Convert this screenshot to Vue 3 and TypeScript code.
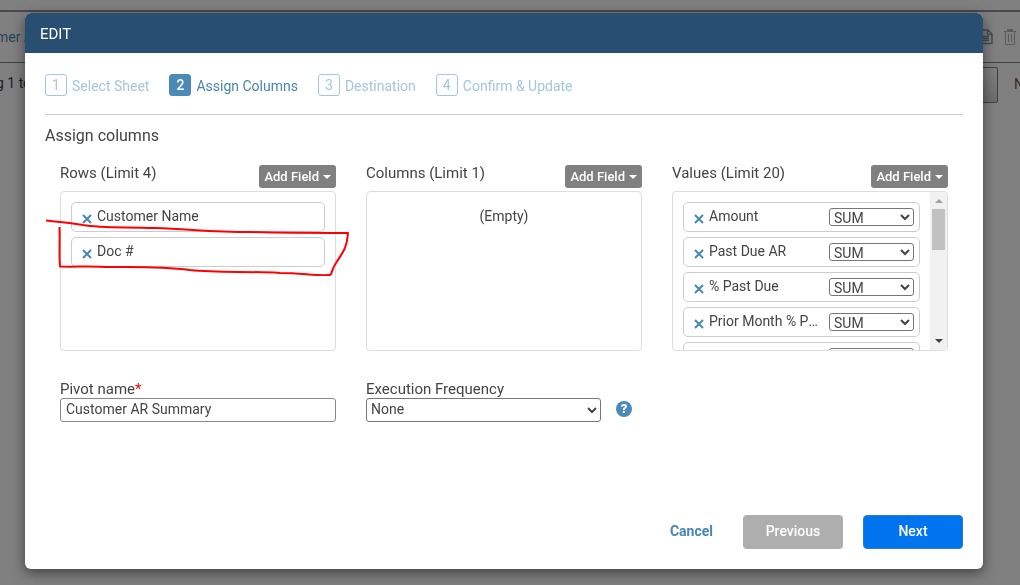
<script setup lang="ts">
import { ref } from 'vue'

interface ValueField {
  name: string
  aggregate: string
}

const steps: string[] = ['Select Sheet', 'Assign Columns', 'Destination', 'Confirm & Update']
const activeStep = ref(1)
const rowFields = ref<string[]>(['Customer Name', 'Doc #'])
const valueFields = ref<ValueField[]>([
  { name: 'Amount', aggregate: 'SUM' },
  { name: 'Past Due AR', aggregate: 'SUM' },
  { name: '% Past Due', aggregate: 'SUM' },
  { name: 'Prior Month % Past Due', aggregate: 'SUM' },
  { name: 'Prior Month AR', aggregate: 'SUM' },
])
const pivotName = ref('Customer AR Summary')
const frequency = ref('None')

function removeRow(index: number): void {
  rowFields.value.splice(index, 1)
}
function removeValue(index: number): void {
  valueFields.value.splice(index, 1)
}
</script>

<template>
  <div class="page">
    <div class="page-row">
      <a class="page-link" href="#">mer A</a>
      <div class="page-icons">
        <svg width="16" height="18" viewBox="0 0 16 18" fill="none" stroke="#444c52" stroke-width="1.4">
          <path d="M1 2h9l4 4v9.500H1zM9.500 2v4.500H14M3 8.500h8M3 10.500h8M3 12.500h8" />
        </svg>
        <svg width="12" height="18" viewBox="0 0 12 18" fill="none" stroke="#5c5c5c">
          <path d="M0 3.500h12M3.500 2.500V1.500h5v1M3 2.500h6M1.500 4v12.500h9V4M4.500 6v8M7.500 6v8" />
        </svg>
      </div>
    </div>
    <div class="page-foot">
      <span class="page-count">g 1 to</span>
      <span class="page-size"></span>
      <span class="page-next">N</span>
    </div>
  </div>

  <div class="overlay">
    <section class="modal" role="dialog" aria-labelledby="modal-title">
      <header class="modal-head"><h1 id="modal-title">EDIT</h1></header>
      <div class="modal-body">
        <ol class="steps">
          <li v-for="(step, i) in steps" :key="step" class="step" :class="{ active: i === activeStep }">
            <span class="step-number">{{ i + 1 }}</span>
            <span class="step-name">{{ step }}</span>
          </li>
        </ol>
        <h2>Assign columns</h2>

        <div class="columns">
          <div class="column">
            <div class="column-head">
              <h3>Rows (Limit 4)</h3>
              <button class="add" type="button">Add Field<i class="caret"></i></button>
            </div>
            <div class="box">
              <ul class="fields">
                <li v-for="(field, i) in rowFields" :key="field" class="field">
                  <button class="remove" type="button" :aria-label="'Remove ' + field" @click="removeRow(i)">
                    <svg width="10" height="10" viewBox="0 0 10 10"><path d="M1 1l8 8M9 1l-8 8" /></svg>
                  </button>
                  <span class="field-name">{{ field }}</span>
                </li>
              </ul>
              <svg class="markup" width="306" height="62" viewBox="0 0 306 62">
                <path d="M1 6.500C16 8 28 9 38 11C55 14 75 13 110 14C145 15 165 18 205 18C240 19 270 19 303 19C302 35 297 39 291 49C286 56 287 62 284 61C270 62 257 59 235 59C200 57 174 59 145 56C115 52 90 53 60 53C43 52 30 53 15 52.500C14 40 15 28 14.500 13" />
              </svg>
            </div>
          </div>

          <div class="column">
            <div class="column-head">
              <h3>Columns (Limit 1)</h3>
              <button class="add" type="button">Add Field<i class="caret"></i></button>
            </div>
            <div class="box"><p class="empty">(Empty)</p></div>
          </div>

          <div class="column">
            <div class="column-head">
              <h3>Values (Limit 20)</h3>
              <button class="add" type="button">Add Field<i class="caret"></i></button>
            </div>
            <div class="box scrolling">
              <ul class="fields">
                <li v-for="(field, i) in valueFields" :key="field.name" class="field">
                  <button class="remove" type="button" :aria-label="'Remove ' + field.name" @click="removeValue(i)">
                    <svg width="10" height="10" viewBox="0 0 10 10"><path d="M1 1l8 8M9 1l-8 8" /></svg>
                  </button>
                  <span class="field-name">{{ field.name }}</span>
                  <select v-model="field.aggregate" class="aggregate" :aria-label="'Aggregate for ' + field.name">
                    <option>SUM</option>
                    <option>COUNT</option>
                  </select>
                </li>
              </ul>
              <div class="scrollbar" aria-hidden="true">
                <i class="arrow up"></i>
                <i class="thumb"></i>
                <i class="arrow down"></i>
              </div>
            </div>
          </div>
        </div>

        <div class="columns form">
          <div class="control">
            <label for="pivot-name">Pivot name<span class="required">*</span></label>
            <input id="pivot-name" v-model="pivotName" type="text" />
          </div>
          <div class="control">
            <label for="frequency">Execution Frequency</label>
            <div class="control-line">
              <select id="frequency" v-model="frequency">
                <option>None</option>
                <option>Daily</option>
              </select>
              <button class="help" type="button" aria-label="Help">?</button>
            </div>
          </div>
        </div>
      </div>

      <footer class="modal-foot">
        <a class="cancel" href="#">Cancel</a>
        <button class="action previous" type="button">Previous</button>
        <button class="action next" type="button">Next</button>
      </footer>
    </section>
  </div>
</template>

<style>
body {
  margin: 0;
  background: #808080;
  overflow: hidden;
}
</style>

<style scoped>
* {
  box-sizing: border-box;
}
h1,
h2,
h3,
p,
ol,
ul {
  margin: 0;
  padding: 0;
  font-weight: 400;
  list-style: none;
}
button,
input,
select {
  font-family: inherit;
  color: inherit;
}
.page,
.overlay {
  font-family: Roboto, sans-serif;
  font-size: 14px;
  line-height: 20px;
  color: #444;
}
.page {
  min-height: 100vh;
  margin-left: -4px;
  padding-top: 10px;
}
.page-row {
  display: flex;
  align-items: center;
  justify-content: space-between;
  height: 53px;
  padding-right: 4px;
  border-top: 2px solid #4a4a4a;
  border-bottom: 1px solid #404040;
}
.page-link {
  color: #24435c;
  text-decoration: none;
}
.page-icons {
  display: flex;
  gap: 10px;
}
.page-foot {
  display: flex;
  align-items: flex-start;
  padding-top: 4px;
  color: #1c1c1c;
}
.page-count {
  flex: 1;
  padding-top: 6px;
}
.page-size {
  width: 60px;
  height: 36px;
  border: 1px solid #404040;
  border-radius: 2px;
  background: linear-gradient(#808080, #6e6e6e);
}
.page-next {
  width: 22px;
  padding: 7px 0 0 16px;
  color: #3c2c24;
}
.overlay {
  position: fixed;
  inset: 0;
  display: flex;
  padding: 13px 37px 16px 25px;
}
.modal {
  flex: 1;
  display: flex;
  flex-direction: column;
  border-radius: 6px;
  background: #fff;
  box-shadow: 0 4px 14px rgba(0, 0, 0, 0.5);
}
.modal-head {
  padding: 11px 15px 9px;
  border-radius: 6px 6px 0 0;
  background: #284e72;
  color: #fff;
}
h1 {
  font-size: 15px;
  line-height: 20px;
}
.modal-body {
  flex: 1;
  padding: 21px 20px 0;
}
.steps {
  display: flex;
  gap: 20px;
  padding-bottom: 16px;
  border-bottom: 1px solid #ccc;
}
.step {
  display: flex;
  gap: 5px;
  color: #a4c6de;
}
.step-number {
  width: 22px;
  height: 22px;
  border: 1px solid #a4c6de;
  border-radius: 3px;
  text-align: center;
}
.step-name {
  line-height: 24px;
}
.step.active {
  color: #4787b3;
}
.active .step-number {
  border-color: #4a8ab7;
  background: #4a8ab7;
  color: #fff;
  font-weight: 500;
}
h2 {
  padding-top: 11px;
  font-size: 16px;
  line-height: 20px;
}
.columns {
  display: grid;
  grid-template-columns: repeat(3, minmax(0, 1fr));
  gap: 30px;
  padding: 19px 15px 0;
}
.column-head {
  display: flex;
  justify-content: space-between;
  align-items: flex-start;
}
h3 {
  font-size: 15px;
  line-height: 16px;
}
.add {
  display: flex;
  align-items: center;
  gap: 4px;
  height: 23px;
  padding: 0 5px;
  border: 0;
  border-radius: 3px;
  background: #808080;
  color: #fff;
  font-size: 13px;
  font-weight: 500;
}
.caret {
  border: 4px solid transparent;
  border-top-color: #fff;
  border-bottom: 0;
}
.box {
  position: relative;
  height: 160px;
  margin-top: 3px;
  border: 1px solid #ddd;
  border-radius: 4px;
}
.scrolling {
  display: flex;
  overflow: hidden;
}
.fields {
  display: grid;
  flex: 1;
  grid-auto-rows: 30px;
  gap: 5px;
  min-width: 0;
  padding: 10px;
}
.field {
  display: flex;
  align-items: center;
  min-width: 0;
  padding: 0 5px 0 10px;
  border: 1px solid #ccc;
  border-radius: 5px;
}
.remove {
  display: flex;
  margin: 3px 5px 0 0;
  padding: 0;
  border: 0;
  background: none;
}
.remove path {
  fill: none;
  stroke: #4787b3;
  stroke-width: 2;
}
.field-name {
  flex: 1;
  overflow: hidden;
  padding-bottom: 2px;
  padding-right: 10px;
  text-overflow: ellipsis;
  white-space: nowrap;
}
select {
  border: 1px solid #767676;
  border-radius: 3px;
  background: #fff;
  font-size: 14px;
}
.aggregate {
  width: 85px;
  height: 18px;
  padding: 0;
}
.markup {
  position: absolute;
  top: 22px;
  left: -16px;
  pointer-events: none;
}
.markup path {
  fill: none;
  stroke: #f00;
  stroke-width: 2;
  stroke-linejoin: round;
}
.empty {
  padding-top: 14px;
  text-align: center;
}
.scrollbar {
  display: flex;
  flex-direction: column;
  align-items: center;
  width: 17px;
  padding: 7px 0;
  background: #f1f1f1;
}
.arrow {
  border: 4px solid transparent;
}
.arrow.up {
  border-top: 0;
  border-bottom-color: #a3a3a3;
}
.arrow.down {
  margin-top: auto;
  border-bottom: 0;
  border-top-color: #404040;
}
.thumb {
  width: 13px;
  height: 41px;
  margin-top: 6px;
  background: #c1c1c1;
}
.form {
  padding-top: 29px;
}
.control {
  display: flex;
  flex-direction: column;
}
label {
  font-size: 15px;
  line-height: 18px;
}
.required {
  color: #f00;
}
input {
  width: 100%;
  height: 24px;
  padding: 0 5px 2px;
  border: 1px solid #888;
  border-radius: 3px;
  background: #fff;
  font-size: 14px;
}
.control-line {
  display: flex;
  align-items: center;
  gap: 15px;
}
.control-line select {
  width: 235px;
  height: 24px;
  padding: 0 0 2px;
}
.help {
  width: 16px;
  height: 16px;
  margin-bottom: 2px;
  padding: 0;
  border: 0;
  border-radius: 50%;
  background: #4a8ab7;
  color: #fff;
  font-size: 13px;
  font-weight: 900;
  line-height: 16px;
}
.modal-foot {
  display: flex;
  align-items: center;
  justify-content: flex-end;
  gap: 20px;
  padding: 0 20px 20px;
}
.cancel {
  margin-right: 10px;
  padding-bottom: 2px;
  color: #4787b3;
  font-weight: 700;
  text-decoration: none;
}
.action {
  width: 100px;
  height: 34px;
  padding: 0 0 2px;
  border: 0;
  border-radius: 4px;
  color: #fff;
  font-size: 14px;
  font-weight: 500;
}
.previous {
  background: #aeaeae;
}
.next {
  border: 1px solid #2d7fc4;
  background: #0073ee;
}
</style>
